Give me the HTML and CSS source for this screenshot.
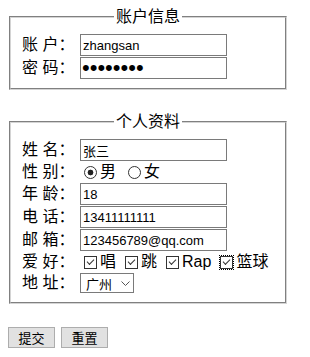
FILE: index.html
```html
<!DOCTYPE html>
<html lang="zh-CN">
<head>
    <meta charset="UTF-8">
    <title>注册</title>
    <link rel="stylesheet" href="styles.css">
</head>
<body>
<form>
    <fieldset class="box">
        <legend>账户信息</legend>
        <div class="row">
            <label class="name">账 户：</label>
            <input class="txt" type="text" value="zhangsan">
        </div>
        <div class="row">
            <label class="name">密 码：</label>
            <input class="txt pwd" type="password" value="12345678">
        </div>
    </fieldset>
    <fieldset class="box">
        <legend>个人资料</legend>
        <div class="row">
            <label class="name">姓 名：</label>
            <input class="txt" type="text" value="张三">
        </div>
        <div class="row short">
            <label class="name">性 别：</label>
            <label class="opt radio-opt"><input type="radio" name="sex" checked>男</label>
            <label class="opt radio-opt"><input type="radio" name="sex">女</label>
        </div>
        <div class="row">
            <label class="name">年 龄：</label>
            <input class="txt" type="text" value="18">
        </div>
        <div class="row">
            <label class="name">电 话：</label>
            <input class="txt" type="text" value="13411111111">
        </div>
        <div class="row">
            <label class="name">邮 箱：</label>
            <input class="txt" type="text" value="123456789@qq.com">
        </div>
        <div class="row short">
            <label class="name">爱 好：</label>
            <label class="opt"><input type="checkbox" checked>唱</label>
            <label class="opt"><input type="checkbox" checked>跳</label>
            <label class="opt"><input type="checkbox" checked>Rap</label>
            <label class="opt"><input class="focus" type="checkbox" checked>篮球</label>
        </div>
        <div class="row short">
            <label class="name">地 址：</label>
            <span class="sel">
                <select>
                    <option>广州</option>
                    <option>深圳</option>
                    <option>北京</option>
                </select>
                <svg class="arrow" width="9" height="5" viewBox="0 0 9 5"><path d="M0.5 0.5 L4.5 4.5 L8.5 0.5" fill="none" stroke="#555" stroke-width="1"/></svg>
            </span>
        </div>
    </fieldset>
    <div class="btns">
        <button type="submit">提交</button>
        <button type="reset">重置</button>
    </div>
</form>
</body>
</html>
```

FILE: styles.css
```css
body{
    margin: 8px;
    font-family: "Liberation Sans", "Noto Sans CJK SC", sans-serif;
    font-size: 16px;
    color: #000;
    background: #fff;
}
.box{
    width: 278px;
    box-sizing: border-box;
    margin: 0 0 23px 1px;
    padding: 8px 11px 9px;
    border: 2px groove #d4d4d4;
    display: flex;
    flex-direction: column;
    gap: 1px;
}
.box legend{
    margin: 0 auto;
    padding: 0 2px;
    font-size: 16px;
    line-height: 18px;
}
.row{
    display: flex;
    align-items: center;
    height: 22px;
}
.row.short{
    height: 20px;
}
.name{
    width: 58px;
    flex: none;
    line-height: 20px;
}
.txt{
    width: 147px;
    height: 22px;
    box-sizing: border-box;
    margin: 0;
    padding: 0 2px;
    border: 1px solid #7a7a7a;
    font-family: "Liberation Sans", "Noto Sans CJK SC", sans-serif;
    font-size: 13px;
    color: #000;
    outline: none;
}
.pwd{
    padding-left: 1px;
    font-size: 22px;
    letter-spacing: 0;
}
.opt{
    display: flex;
    align-items: center;
    margin-right: 5px;
    line-height: 20px;
}
.radio-opt{
    margin-right: 8px;
}
.opt input{
    appearance: none;
    -webkit-appearance: none;
    width: 13px;
    height: 13px;
    box-sizing: border-box;
    margin: 0 3px 0 4px;
    border: 1px solid #333;
    background: #fff;
    position: relative;
}
.opt input[type=radio]{
    border-radius: 50%;
}
.opt input[type=radio]:checked{
    background: radial-gradient(circle, #222 0, #222 2.6px, #fff 3.2px);
}
.opt input[type=checkbox]:checked::after{
    content: "";
    position: absolute;
    left: 2px;
    top: 2px;
    width: 6px;
    height: 3px;
    border-left: 1px solid #333;
    border-bottom: 1px solid #333;
    transform: rotate(-45deg);
}
.opt .focus{
    outline: 1px dotted #000;
    outline-offset: 0;
}
.sel{
    position: relative;
    display: inline-block;
    height: 20px;
}
.sel select{
    appearance: none;
    -webkit-appearance: none;
    width: 54px;
    height: 20px;
    box-sizing: border-box;
    margin: 0;
    padding: 0 0 0 5px;
    border: 1px solid #7a7a7a;
    border-radius: 0;
    background: #fff;
    font-family: "Noto Sans CJK SC", sans-serif;
    font-size: 13px;
    color: #000;
}
.arrow{
    position: absolute;
    left: 41px;
    top: 8px;
    pointer-events: none;
}
.btns{
    display: flex;
    gap: 6px;
}
.btns button{
    width: 47px;
    height: 21px;
    box-sizing: border-box;
    margin: 0;
    padding: 0;
    border: 1px solid #adadad;
    background: #e1e1e1;
    font-family: "Noto Sans CJK SC", sans-serif;
    font-size: 13px;
    line-height: 19px;
    color: #000;
}
```
